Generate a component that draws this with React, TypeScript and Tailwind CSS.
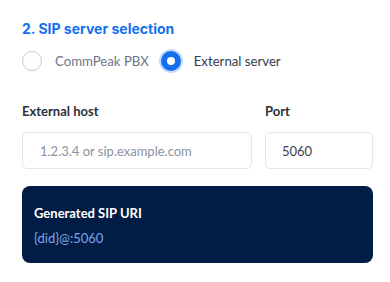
const Radio = ({ checked, label }: { checked: boolean; label: string }) => (
  <label className="flex items-center gap-[13px]">
    {checked ? (
      <span className="flex h-5 w-5 items-center justify-center rounded-full bg-[#1570ef] ring-2 ring-[#c7dcfb]">
        <span className="h-2 w-2 rounded-full bg-white" />
      </span>
    ) : (
      <span className="h-5 w-5 rounded-full border border-[#c4c8cf] bg-white" />
    )}
    <span className={checked ? "text-[#353b4a]" : "text-[#6b7689]"}>{label}</span>
  </label>
);

const App = () => {
  return (
    <div className="min-h-screen bg-white pl-[22px] pr-[17px] pt-[19px] font-['Lato','Liberation_Sans',sans-serif]">
      <h2 className="font-['Inter',sans-serif] text-[14px] font-bold leading-5 text-[#1570ef]">
        2. SIP server selection
      </h2>

      <div className="mt-[12px] flex items-center gap-[12px] text-[13.2px] leading-5">
        <Radio checked={false} label="CommPeak PBX" />
        <Radio checked label="External server" />
      </div>

      <div className="mt-[30px] flex gap-[13px]">
        <div className="flex flex-1 flex-col">
          <span className="text-[13px] font-bold leading-5 text-[#2b2f38]">External host</span>
          <input
            className="mt-[11px] h-[37px] rounded-[5px] border border-[#e3e6ea] px-[17px] text-[13px] text-[#2b2f38] placeholder:text-[#8b93a0] outline-none"
            placeholder="1.2.3.4 or sip.example.com"
          />
        </div>
        <div className="flex w-[108px] flex-col">
          <span className="text-[13px] font-bold leading-5 text-[#2b2f38]">Port</span>
          <input
            className="mt-[11px] h-[37px] rounded-[5px] border border-[#e3e6ea] px-[16px] text-[13px] text-[#3a3f4a] outline-none"
            defaultValue="5060"
          />
        </div>
      </div>

      <div className="mt-[17px] h-[77px] rounded-lg bg-[#011c45] px-3 pt-[17px]">
        <div className="text-[13px] font-bold leading-5 text-white">Generated SIP URI</div>
        <div className="mt-[5px] text-[13px] leading-5 text-[#7ea8e6]">{"{did}@:5060"}</div>
      </div>
    </div>
  );
};

export default App;
